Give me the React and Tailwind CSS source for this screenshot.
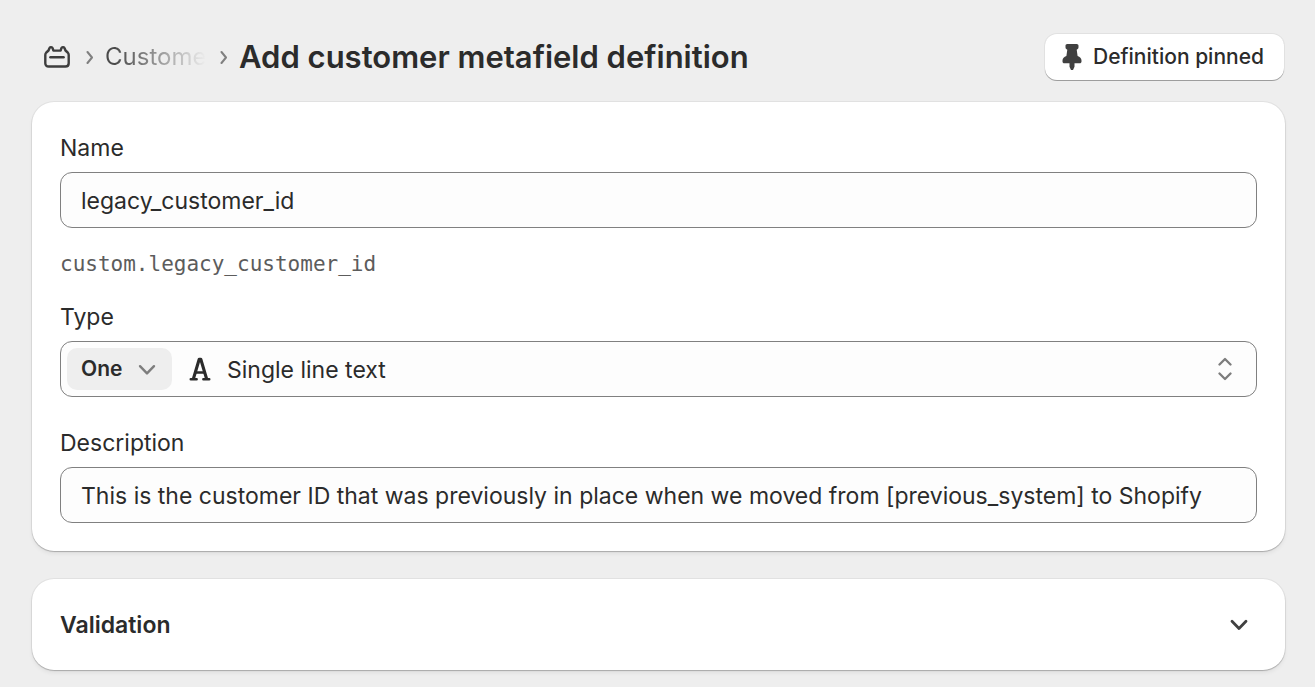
import React, { useState } from 'react';

const StoreIcon = () => (
  <svg width="28" height="24" viewBox="0 0 28 24" fill="none" stroke="#3d3d3d" strokeWidth="2.4" strokeLinecap="round" strokeLinejoin="round">
    <path d="M2.3 10c0-1.200.3-1.800 1-2.500L5.500 5.500 6.400 3.200c.2-.7.700-1 1.300-1h.5c.7 0 1.200.4 1.400 1l.8 2.400h7.200l.8-2.400c.2-.6.7-1 1.400-1h.5c.6 0 1.100.3 1.300 1l.9 2.300 2.200 2c.7.7 1 1.300 1 2.500v8.200c0 2-1.300 3.300-3.300 3.300H5.600c-2 0-3.300-1.300-3.300-3.300z" />
    <path d="M7.400 12.300h13.200" />
  </svg>
);

const PinIcon = () => (
  <svg width="20" height="26" viewBox="0 0 20 26" fill="#404040">
    <path d="M5.3 0h9.400c1.100 0 1.800.7 1.800 1.800v1.500c0 1.400-.8 2-1.800 2.500l.9 6.200c2.300.9 3.900 2.400 3.900 4.600v.8c0 1.100-.7 1.800-1.800 1.800h-5.200v3.600L11 26H9l-1.500-3.200v-3.600H2.300c-1.100 0-1.800-.7-1.800-1.800v-.8c0-2.200 1.600-3.700 3.900-4.600l.9-6.200C4.300 5.300 3.500 4.700 3.500 3.300V1.800C3.500.7 4.200 0 5.300 0z" />
  </svg>
);

const TextIcon = () => (
  <svg width="22" height="24" viewBox="0 0 22 24" fill="none" stroke="#2b2b2b" strokeLinecap="round" strokeLinejoin="round">
    <path d="M4.500 21.500 10.200 2.300h1.600L17.500 21.500" strokeWidth="3.100" />
    <path d="M6.700 15.500h8.600" strokeWidth="2.400" />
    <path d="M1.800 22.300h5.800M14.400 22.300h5.800" strokeWidth="2.600" />
  </svg>
);

const Crumb = () => (
  <svg width="8" height="14" viewBox="0 0 8 14" fill="none" stroke="#808080" strokeWidth="2" strokeLinecap="round" strokeLinejoin="round">
    <path d="M1.500 2 6 7.500 1.500 13" />
  </svg>
);

const Chevron = ({ className }) => (
  <svg width="18" height="12" viewBox="0 0 18 12" fill="none" stroke="currentColor" strokeLinecap="round" strokeLinejoin="round" className={className}>
    <path d="m2 2.200 7 7.200 7-7.200" />
  </svg>
);

const UpDown = () => (
  <svg width="14" height="24" viewBox="0 0 14 24" fill="none" stroke="#7d7d7d" strokeWidth="2.300" strokeLinecap="round" strokeLinejoin="round">
    <path d="m1.500 7.500 5.500-5.500 5.500 5.500M1.500 16.500l5.500 5.500 5.500-5.500" />
  </svg>
);

const cardClass =
  'rounded-[22px] bg-white shadow-[0_0_0_1px_rgba(0,0,0,0.05),0_1px_1px_rgba(0,0,0,0.2),0_3px_4px_rgba(0,0,0,0.06)]';
const fieldClass =
  'h-14 w-full rounded-xl border border-[#808080] bg-[#fdfdfd]';

const TextField = ({ id, label, value, onChange }) => (
  <div>
    <label htmlFor={id} className="mb-2.5 block">{label}</label>
    <input
      id={id}
      type="text"
      value={value}
      onChange={(e) => onChange(e.target.value)}
      className={`${fieldClass} px-5 pt-0.5`}
    />
  </div>
);

export default function App() {
  const [name, setName] = useState('legacy_customer_id');
  const [description, setDescription] = useState(
    'This is the customer ID that was previously in place when we moved from [previous_system] to Shopify'
  );
  const [pinned, setPinned] = useState(true);

  return (
    <main className="min-h-screen bg-[#eeeeee] px-8 pt-[34px] pb-4 pr-[30px] font-['Inter',sans-serif] text-[23px] leading-7 text-[#2b2b2b]">
      <header className="mb-[22px] flex items-center justify-between">
        <div className="flex items-center">
          <nav aria-label="Breadcrumb" className="ml-[11px] flex items-center">
            <a href="#store" aria-label="Store"><StoreIcon /></a>
            <span className="ml-[15px]"><Crumb /></span>
            <a
              href="#customers"
              className="ml-[11px] w-[101px] overflow-hidden bg-linear-to-r from-[#4a4a4a] from-10% to-transparent bg-clip-text text-2xl leading-7 whitespace-nowrap text-transparent"
            >
              Custome
            </a>
            <span className="ml-3.5"><Crumb /></span>
          </nav>
          <h1 className="ml-[11px] text-[31px] leading-10 font-semibold">Add customer metafield definition</h1>
        </div>
        <button
          type="button"
          aria-pressed={pinned}
          onClick={() => setPinned(!pinned)}
          className="mr-px flex h-[46px] items-center gap-[11px] rounded-xl bg-white pr-5 pl-[17px] text-[21px] font-medium shadow-[0_0_0_1px_rgba(0,0,0,0.05),0_1px_0_rgba(0,0,0,0.3)]"
        >
          <PinIcon />
          Definition pinned
        </button>
      </header>

      <section className={`${cardClass} mb-7 px-7 pt-8 pb-7`}>
        <TextField id="name" label="Name" value={name} onChange={setName} />
        <p className="mt-[22px] font-['DejaVu_Sans_Mono',monospace] text-[21px] text-[#5c5c5c]">custom.{name}</p>

        <div className="mt-[25px]">
          <label htmlFor="type" className="mb-2.5 block">Type</label>
          <div className={`${fieldClass} flex items-center pl-1.5`}>
            <div className="relative">
              <select
                aria-label="Number of values"
                className="h-[42px] w-[105px] appearance-none rounded-[10px] bg-[#eeeeee] pl-3.5 text-[21px] font-semibold"
              >
                <option>One</option>
                <option>List</option>
              </select>
              <Chevron className="pointer-events-none absolute top-4 right-4 stroke-[2.4] text-[#7d7d7d]" />
            </div>
            <div className="relative ml-[17px] flex h-full flex-1 items-center">
              <span className="pointer-events-none absolute left-0"><TextIcon /></span>
              <select id="type" className="h-full w-full appearance-none pt-0.5 pl-[38px]">
                <option>Single line text</option>
              </select>
              <span className="pointer-events-none absolute right-6"><UpDown /></span>
            </div>
          </div>
        </div>

        <div className="mt-8">
          <TextField id="description" label="Description" value={description} onChange={setDescription} />
        </div>
      </section>

      <section className={cardClass}>
        <button type="button" className="flex w-full items-center justify-between pt-8 pr-[37px] pb-[31px] pl-7 text-left">
          <span className="font-semibold">Validation</span>
          <Chevron className="stroke-[2.8] text-[#404040]" />
        </button>
      </section>
    </main>
  );
}
